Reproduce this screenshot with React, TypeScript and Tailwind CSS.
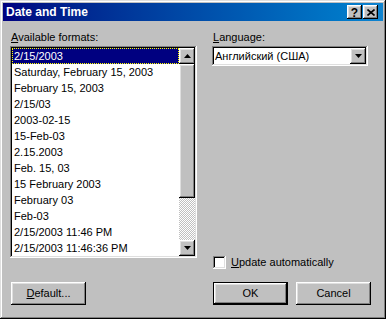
import React from 'react'

const RAISED =
  'shadow-[inset_-1px_-1px_#000,inset_1px_1px_#fff,inset_-2px_-2px_#808080,inset_2px_2px_#dfdfdf]'
const SUNKEN =
  'shadow-[inset_-1px_-1px_#fff,inset_1px_1px_#808080,inset_-2px_-2px_#dfdfdf,inset_2px_2px_#000]'

const formats = [
  '2/15/2003',
  'Saturday, February 15, 2003',
  'February 15, 2003',
  '2/15/03',
  '2003-02-15',
  '15-Feb-03',
  '2.15.2003',
  'Feb. 15, 03',
  '15 February 2003',
  'February 03',
  'Feb-03',
  '2/15/2003 11:46 PM',
  '2/15/2003 11:46:36 PM',
]

function Arrow({ up }: { up?: boolean }) {
  return (
    <svg width="7" height="4" viewBox="0 0 7 4" className="block">
      {up ? <path d="M3.5 0 L7 4 L0 4 Z" fill="#000" /> : <path d="M0 0 L7 0 L3.5 4 Z" fill="#000" />}
    </svg>
  )
}

function ArrowButton({ up }: { up?: boolean }) {
  return (
    <div className={`w-[16px] h-[16px] bg-[#c0c0c0] flex items-center justify-center ${RAISED}`}>
      <Arrow up={up} />
    </div>
  )
}

function Button({ children, isDefault }: { children: React.ReactNode; isDefault?: boolean }) {
  if (isDefault) {
    return (
      <div className="w-[75px] h-[23px] border border-black flex">
        <div className={`flex-1 flex items-center justify-center bg-[#c0c0c0] ${RAISED}`}>{children}</div>
      </div>
    )
  }
  return (
    <div className={`w-[75px] h-[23px] flex items-center justify-center bg-[#c0c0c0] ${RAISED}`}>{children}</div>
  )
}

export default function App() {
  return (
    <div
      className="w-[386px] h-[319px] bg-[#c0c0c0] p-[3px] flex flex-col text-[11px] leading-[13px] text-black shadow-[inset_-1px_-1px_#000,inset_1px_1px_#dfdfdf,inset_-2px_-2px_#808080,inset_2px_2px_#fff]"
      style={{ fontFamily: '"Liberation Sans", Arial, sans-serif' }}
    >
      {/* Title bar */}
      <div className="h-[18px] flex items-center pl-[3px] pr-[5px] bg-gradient-to-r from-[#000080] to-[#1084d0]">
        <span className="flex-1 text-white font-bold text-[12px]">Date and Time</span>
        <div className="flex gap-[1px]">
          <div className={`w-[15px] h-[14px] bg-[#c0c0c0] flex items-center justify-center font-bold text-[12px] leading-none pt-[1px] ${RAISED}`}>
            ?
          </div>
          <div className={`w-[15px] h-[14px] bg-[#c0c0c0] flex items-center justify-center ${RAISED}`}>
            <svg width="8" height="7" viewBox="0 0 8 7" className="block">
              <path d="M0.5 0.5 L7.5 6.5 M7.5 0.5 L0.5 6.5" stroke="#000" strokeWidth="1.6" />
            </svg>
          </div>
        </div>
      </div>

      {/* Body */}
      <div className="flex h-[238px] mt-[10px] pl-[7px]">
        {/* Formats */}
        <div className="w-[187px] flex flex-col">
          <div className="h-[13px] mb-[2px] pl-[1px]">
            <span className="underline underline-offset-[1px]">A</span>vailable formats:
          </div>
          <div className={`h-[212px] bg-white p-[2px] flex ${SUNKEN}`}>
            <div className="flex-1 flex flex-col">
              {formats.map((f, i) => (
                <div
                  key={f}
                  className={
                    i === 0
                      ? 'h-[16px] leading-[14px] pl-[1px] bg-[#000080] text-white border border-dotted border-[#ffff00]'
                      : 'h-[16px] leading-[16px] pl-[2px] whitespace-nowrap'
                  }
                >
                  {f}
                </div>
              ))}
            </div>
            <div className="w-[16px] flex flex-col">
              <ArrowButton up />
              <div className={`h-[134px] bg-[#c0c0c0] ${RAISED}`} />
              <div className="flex-1 bg-[repeating-conic-gradient(#fff_0_25%,#c0c0c0_0_50%)] bg-[length:2px_2px]" />
              <ArrowButton />
            </div>
          </div>
        </div>

        {/* Language */}
        <div className="w-[156px] ml-[15px] flex flex-col">
          <div className="h-[13px] mb-[2px] pl-[1px]">
            <span className="underline underline-offset-[1px]">L</span>anguage:
          </div>
          <div className={`h-[20px] bg-white p-[2px] flex items-center ${SUNKEN}`}>
            <span className="flex-1 pl-[1px]">Английский (США)</span>
            <div className={`w-[16px] h-[16px] bg-[#c0c0c0] flex items-center justify-center ${RAISED}`}>
              <Arrow />
            </div>
          </div>
          <div className="mt-auto flex items-center gap-[5px] pl-[1px]">
            <div className={`w-[13px] h-[13px] bg-white ${SUNKEN}`} />
            <span>
              <span className="underline underline-offset-[1px]">U</span>pdate automatically
            </span>
          </div>
        </div>
      </div>

      {/* Buttons */}
      <div className="flex mt-[13px] pl-[8px]">
        <div className="w-[202px]">
          <Button>
            <span>
              <span className="underline underline-offset-[1px]">D</span>efault...
            </span>
          </Button>
        </div>
        <div className="flex gap-[8px]">
          <Button isDefault>OK</Button>
          <Button>Cancel</Button>
        </div>
      </div>
    </div>
  )
}
